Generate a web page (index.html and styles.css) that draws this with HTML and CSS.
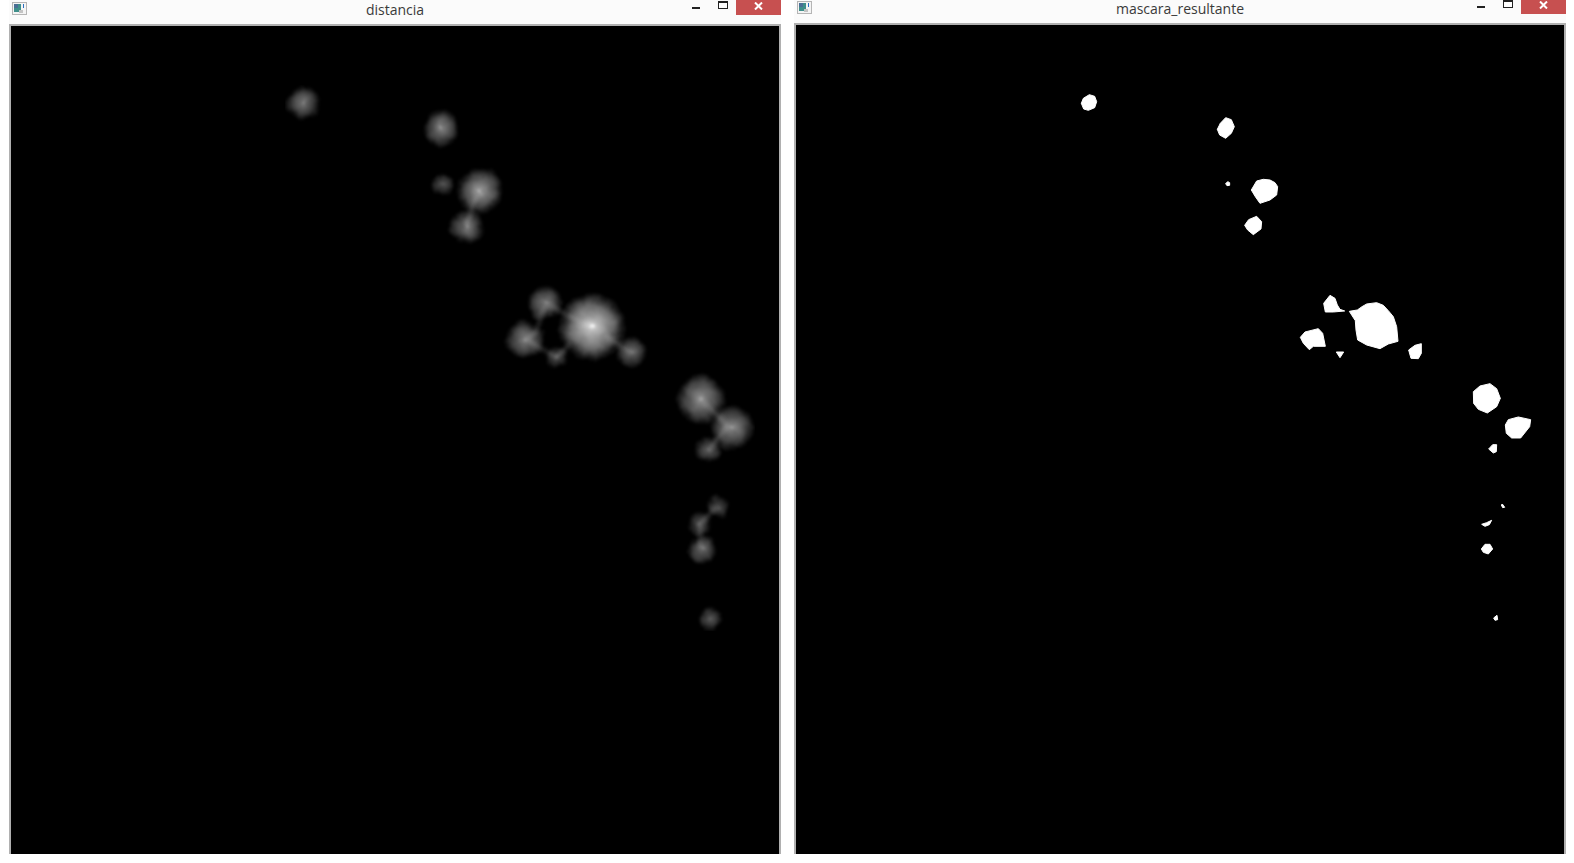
FILE: index.html
```html
<!DOCTYPE html>
<html>
<head>
    <title>distancia / mascara_resultante</title>
    <link rel="stylesheet" href="styles.css">
</head>
<body>
    <div class="desktop">
        <div class="window window-left">
            <div class="titlebar">
                <svg class="app-icon" viewBox="0 0 15 13">
                    <rect x="0.5" y="0.5" width="14" height="12" fill="#f4f4f4" stroke="#b5b5b5"/>
                    <rect x="2" y="2" width="7" height="8" fill="#3f8f8a"/>
                    <rect x="2" y="2" width="4" height="4" fill="#4a6f95"/>
                    <rect x="7" y="8" width="4" height="3" fill="#c4c4c4"/>
                    <rect x="11" y="2" width="1" height="4" fill="#2a6fc0"/>
                </svg>
                <span class="title">distancia</span>
                <div class="controls">
                    <span class="btn-min"></span>
                    <span class="btn-max"></span>
                    <span class="btn-close">
                        <svg viewBox="0 0 9 8"><path d="M1 0.5 L8 7.5 M8 0.5 L1 7.5" stroke="#fff" stroke-width="2"/></svg>
                    </span>
                </div>
            </div>
            <div class="frame">
                <!-- viewBox uses page coordinates -->
                <svg class="image image-left" viewBox="11 26 768 828">
                    <defs>
                        <radialGradient id="dist">
                            <stop offset="0" stop-color="#fff" stop-opacity="1"/>
                            <stop offset="0.12" stop-color="#fff" stop-opacity="0.78"/>
                            <stop offset="0.6" stop-color="#fff" stop-opacity="0.42"/>
                            <stop offset="0.88" stop-color="#fff" stop-opacity="0.1"/>
                            <stop offset="1" stop-color="#fff" stop-opacity="0"/>
                        </radialGradient>
                        <filter id="soft" x="0" y="0" width="100%" height="100%">
                            <feTurbulence type="fractalNoise" baseFrequency="0.07" numOctaves="2" seed="4" result="noise"/>
                            <feDisplacementMap in="SourceGraphic" in2="noise" scale="7" xChannelSelector="R" yChannelSelector="G"/>
                            <feGaussianBlur stdDeviation="0.8"/>
                        </filter>
                        <filter id="softer"><feGaussianBlur stdDeviation="2"/></filter>
                    </defs>
                    <g filter="url(#soft)">
                        <circle class="spot" cx="303" cy="103" r="18" fill="url(#dist)" opacity="0.55"/>
                        <ellipse class="spot" cx="441" cy="128" rx="18" ry="20" fill="url(#dist)" opacity="0.6"/>
                        <circle class="spot" cx="443" cy="184" r="12" fill="url(#dist)" opacity="0.36"/>
                        <circle class="spot" cx="480" cy="191" r="24" fill="url(#dist)" opacity="0.72"/>
                        <circle class="spot" cx="467" cy="227" r="18" fill="url(#dist)" opacity="0.58"/>
                        <circle class="spot" cx="545" cy="303" r="18" fill="url(#dist)" opacity="0.56"/>
                        <circle class="spot" cx="592" cy="327" r="35" fill="url(#dist)" opacity="0.98"/>
                        <ellipse class="spot" cx="525" cy="339" rx="21" ry="19" fill="url(#dist)" opacity="0.58"/>
                        <circle class="spot" cx="557" cy="357" r="12" fill="url(#dist)" opacity="0.4"/>
                        <circle class="spot" cx="631" cy="352" r="16" fill="url(#dist)" opacity="0.5"/>
                        <circle class="spot" cx="701" cy="399" r="25" fill="url(#dist)" opacity="0.68"/>
                        <circle class="spot" cx="732" cy="428" r="23" fill="url(#dist)" opacity="0.64"/>
                        <circle class="spot" cx="708" cy="450" r="14" fill="url(#dist)" opacity="0.45"/>
                        <circle class="spot" cx="718" cy="506" r="12" fill="url(#dist)" opacity="0.36"/>
                        <circle class="spot" cx="700" cy="524" r="13" fill="url(#dist)" opacity="0.38"/>
                        <circle class="spot" cx="702" cy="550" r="15" fill="url(#dist)" opacity="0.5"/>
                        <circle class="spot" cx="711" cy="619" r="12" fill="url(#dist)" opacity="0.4"/>
                    </g>
                    <g class="ridges" filter="url(#softer)">
                        <path d="M476 195 L467 225"/>
                        <path d="M548 305 L590 326"/>
                        <path d="M545 305 L536 332 L527 339"/>
                        <path d="M527 340 L556 357 L570 344"/>
                        <path d="M605 335 L630 352"/>
                        <path d="M705 403 L728 426 L709 449"/>
                        <path d="M716 507 L700 524 L701 548"/>
                    </g>
                </svg>
            </div>
        </div>

        <div class="window window-right">
            <div class="titlebar">
                <svg class="app-icon" viewBox="0 0 15 13">
                    <rect x="0.5" y="0.5" width="14" height="12" fill="#f4f4f4" stroke="#b5b5b5"/>
                    <rect x="2" y="2" width="7" height="8" fill="#3f8f8a"/>
                    <rect x="2" y="2" width="4" height="4" fill="#4a6f95"/>
                    <rect x="7" y="8" width="4" height="3" fill="#c4c4c4"/>
                    <rect x="11" y="2" width="1" height="4" fill="#2a6fc0"/>
                </svg>
                <span class="title">mascara_resultante</span>
                <div class="controls">
                    <span class="btn-min"></span>
                    <span class="btn-max"></span>
                    <span class="btn-close">
                        <svg viewBox="0 0 9 8"><path d="M1 0.5 L8 7.5 M8 0.5 L1 7.5" stroke="#fff" stroke-width="2"/></svg>
                    </span>
                </div>
            </div>
            <div class="frame">
                <svg class="image image-right" viewBox="796 25 768 829">
                    <g class="mask" transform="translate(1060 80) scale(0.3333)">
                        <polygon points="64,70 70,55 88,44 104,49 110,65 104,83 85,91 71,87"/>
                        <polygon points="497,113 514,119 523,140 514,160 497,175 479,165 472,148 481,130"/>
                        <polygon points="497,311 503,305 509,308 509,316 501,317"/>
                        <polygon points="574,330 590,303 610,298 630,300 645,308 653,320 650,345 630,360 600,370 586,350"/>
                        <polygon points="554,436 566,419 590,409 605,425 603,447 580,464 563,450"/>
                    </g>
                    <g class="mask" transform="translate(1280 280) scale(0.3333)">
                        <polygon points="131,70 150,46 165,55 172,75 180,88 194,93 160,96 136,96"/>
                        <polygon points="208,94 232,90 246,80 260,72 290,68 310,76 325,92 340,110 350,140 354,184 325,192 300,206 260,195 233,180 228,150 226,122"/>
                        <polygon points="61,172 75,156 115,146 128,160 136,199 100,199 88,209 70,190"/>
                        <polygon points="169,216 191,216 180,233"/>
                        <polygon points="386,210 405,196 424,191 424,220 415,236 393,235"/>
                    </g>
                    <g class="mask" transform="translate(1450 370) scale(0.3333)">
                        <polygon points="70,65 90,48 120,41 140,56 151,85 140,110 112,129 85,118 71,100"/>
                        <polygon points="166,165 175,149 205,141 242,149 239,170 212,204 185,204 169,190"/>
                        <polygon points="116,237 128,224 140,224 139,245 130,249"/>
                        <polygon points="154,405 157,402 164,412 158,413"/>
                        <polygon points="95,463 110,458 125,451 118,464 105,469"/>
                        <polygon points="94,537 105,523 120,523 128,537 115,552 100,547"/>
                        <polygon points="131,744 141,736 143,749 135,751"/>
                    </g>
                </svg>
            </div>
        </div>
    </div>
</body>
</html>
```

FILE: styles.css
```css
html, body {
    margin: 0;
    padding: 0;
    background-color: #fff;
    overflow: hidden;
}

.desktop {
    display: flex;
    gap: 13px;
    padding-left: 9px;
}

.window {
    flex: none;
    width: 772px;
    background-color: #fbfbfb;
}

.titlebar {
    display: grid;
    grid-template-columns: 1fr auto 1fr;
    height: 24px;
    font-family: "Open Sans", Arial, sans-serif;
    font-size: 14px;
    color: #3a3a3a;
}

.window-right .titlebar {
    height: 23px;
}

.app-icon {
    width: 15px;
    height: 13px;
    margin: 2px 0 0 3px;
}

.window-right .app-icon {
    margin-top: 1px;
}

.title {
    line-height: 20px;
}

.window-right .title {
    line-height: 18px;
}

.controls {
    display: flex;
    justify-content: flex-end;
    align-items: flex-start;
}

.btn-min {
    width: 8px;
    height: 2px;
    margin-top: 7px;
    margin-right: 18px;
    background-color: #222;
}

.window-right .btn-min {
    margin-top: 6px;
}

.btn-max {
    box-sizing: border-box;
    width: 10px;
    height: 8px;
    margin-top: 1px;
    margin-right: 8px;
    border: 1px solid #222;
    border-top-width: 2px;
    background-color: #fff;
}

.window-right .btn-max {
    margin-top: 0;
}

.btn-close {
    display: flex;
    align-items: center;
    justify-content: center;
    width: 45px;
    height: 15px;
    background-color: #c75050;
}

.window-right .btn-close {
    height: 14px;
}

.btn-close svg {
    width: 9px;
    height: 8px;
    margin-top: -4px;
}

.frame {
    border: 2px solid #b0b0b0;
    border-bottom: 0;
}

.image {
    display: block;
    background-color: #000;
    width: 768px;
}

.image-left {
    height: 828px;
}

.image-right {
    height: 829px;
}

.spot {
    mix-blend-mode: screen;
}

.ridges path {
    fill: none;
    stroke: #fff;
    stroke-width: 3;
    opacity: 0.2;
}

.mask {
    fill: #fff;
    stroke: #fff;
    stroke-width: 3;
    stroke-linejoin: round;
}
```
